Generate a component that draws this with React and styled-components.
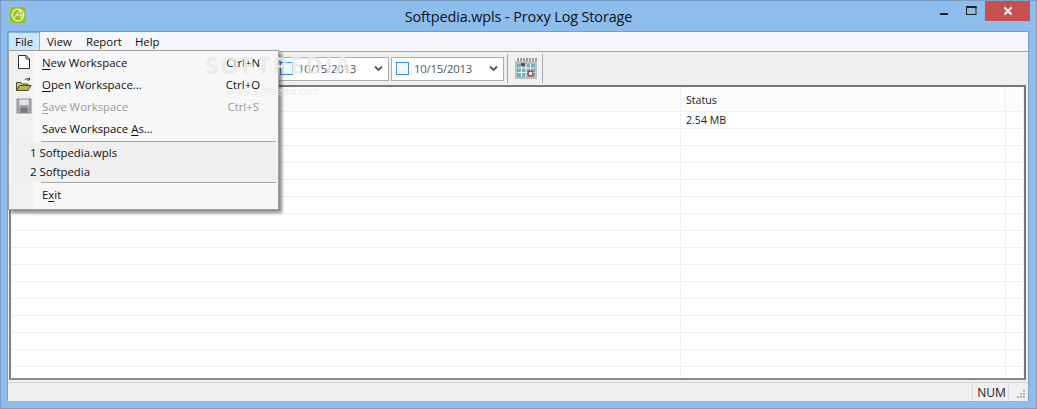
import React from "react";
import styled, { createGlobalStyle } from "styled-components";

const Global = createGlobalStyle`
  html, body { margin: 0; padding: 0; background: #8dbdec; }
  * { box-sizing: border-box; }
`;
const FONT = `"Open Sans", "Noto Sans", "Liberation Sans", sans-serif`;

const Win = styled.div`
  position: relative; width: 1037px; height: 409px; overflow: hidden;
  background: #8dbdec; border: 1px solid #7a9ec8;
  display: flex; flex-direction: column; font-family: ${FONT}; color: #111;
`;
const TitleBar = styled.div`
  height: 30px; flex: none; position: relative; display: flex; align-items: center; justify-content: center;
`;
const Title = styled.div`font-size: 14.4px; letter-spacing: -0.1px; color: #111; margin-top: 1px;`;
const AppIcon = styled.svg`position: absolute; left: 9px; top: 6px;`;
const Controls = styled.div`position: absolute; right: 6px; top: 0; display: flex; align-items: flex-start;`;
const CtrlBtn = styled.div`width: ${p => p.$w}px; height: 20px; display: flex; align-items: center; justify-content: center; background: ${p => p.$bg || "transparent"};`;
const Client = styled.div`
  flex: 1; min-height: 0; margin: 0 7px 7px 6px; display: flex; flex-direction: column;
  background: #f0f0f0; border-left: 1px solid #7a9ec8; border-right: 1px solid #7a9ec8; border-top: 1px solid #7a9ec8;
`;
const MenuBar = styled.div`height: 20px; flex: none; background: #f5f6f9; display: flex; align-items: center; font-size: 11.4px; border-bottom: 1px solid #a2a2a2;`;
const MenuItem = styled.div`
  height: 19px; padding: 0 ${p => p.$pad ?? 7}px; display: flex; align-items: center; margin-right: ${p => p.$mr ?? 0}px;
  ${p => p.$active && `background: #cfe5fa; border: 1px solid #7fb3e6;`}
`;
const Toolbar = styled.div`height: 33px; flex: none; background: #f0f0f0; display: flex; align-items: center; padding-left: 267px;`;
const DatePick = styled.div`
  width: ${p => p.$w}px; height: 24px; background: #fff; border: 1px solid #acacac; display: flex; align-items: center;
  padding-left: 4px; font-size: 11.4px; letter-spacing: -0.25px; color: #555; margin-right: 2px; justify-content: space-between; padding-right: 5px;
`;
const DateLeft = styled.div`display: flex; align-items: center; gap: 5px;`;
const CheckBox = styled.div`width: 13px; height: 13px; border: 1px solid #3c8ee6; background: #f2f8fe;`;
const Sep = styled.div`width: 1px; height: 29px; background: #a8a8a8; margin: ${p => p.$m};`;
const ListBox = styled.div`
  flex: 1; min-height: 0; margin: 0 2px 2px 1px; background: #fff; border: 2px solid #777; border-left-color: #7f7f7f;
  border-bottom-color: #8a8a8a; display: flex; flex-direction: column; overflow: hidden;
`;
const HeaderRow = styled.div`height: 25px; flex: none; background: #fcfcfc; display: grid; grid-template-columns: 670px 325px 1fr; border-bottom: 1px solid #eaf1fa; font-size: 10.6px;`;
const HeadCell = styled.div`border-right: 1px solid #e8f0fb; padding: 6px 0 0 5px; color: #222;`;
const Row = styled.div`height: 17px; flex: none; display: grid; grid-template-columns: 670px 325px 1fr; border-bottom: 1px solid #f0f0f0; font-size: 10.6px;`;
const Cell = styled.div`border-right: 1px solid #f0f0f0; padding: 0 0 0 5px; color: #222; line-height: 16px;`;
const StatusBar = styled.div`height: 19px; flex: none; border-top: 1px solid #d4d4d4; background: #efefef; display: flex; justify-content: flex-end; align-items: stretch; font-size: 12px; position: relative;`;
const NumPanel = styled.div`width: 37px; border-left: 1px solid #dcdcdc; border-right: 1px solid #dcdcdc; margin-right: 19px; padding-left: 2px; display: flex; align-items: center; justify-content: center; color: #222; font-size: 12px;`;
const Grip = styled.svg`position: absolute; right: 2px; bottom: 2px;`;
const Menu = styled.div`
  position: absolute; left: 7px; top: 49px; width: 271px; height: 160px; background: #f7f7f7;
  border: 1px solid #a0a0a0; box-shadow: 3px 3px 3px rgba(0,0,0,.45); font-size: 11.4px; z-index: 5;
  display: flex; flex-direction: column;
`;
const Gutter = styled.div`position: absolute; left: 0; top: 0; bottom: 0; width: 25px; background: #f1f1f1;`;
const Item = styled.div`
  height: 22px; display: flex; align-items: center; position: relative; padding: 0 18px 0 33px; justify-content: space-between;
  color: ${p => p.$off ? "#9a9a9a" : "#111"};
`;
const Shortcut = styled.span`text-align: right; margin-right: ${p => p.$mr ?? 0}px;`;
const IconSlot = styled.div`position: absolute; left: 7px; top: 3px; width: 16px; height: 16px;`;
const Divider = styled.div`height: 1px; background: #a8a8a8; margin: ${p => p.$m}; margin-left: 32px; margin-right: 2px; position: relative;`;
const Recent = styled.div`background: #efefef; position: relative; padding: 1px 0 1px 21px; height: 40px; display: flex; flex-direction: column;`;
const RecentItem = styled.div`height: 19px; display: flex; align-items: center;`;
const U = styled.span`text-decoration: underline; text-underline-offset: 2px;`;
const Mark = styled.div`
  position: absolute; left: ${p => p.$x}px; top: ${p => p.$y}px; font-size: ${p => p.$s}px; font-weight: ${p => p.$w}; color: rgba(232,232,232,.8);
  letter-spacing: ${p => p.$ls}px; z-index: 6; pointer-events: none; white-space: nowrap;
`;

const rows = Array.from({ length: 15 });

export default function App() {
  return (
    <>
      <Global />
      <Win>
        <TitleBar>
          <AppIcon width="16" height="16" viewBox="0 0 16 16">
            <rect x="0" y="0" width="16" height="16" rx="3" fill="#9cc11c" />
            <circle cx="8" cy="8" r="5.8" fill="none" stroke="#f1f7d8" strokeWidth="1.2" />
            <path d="M3.5 12 L10.5 2.5 L11.5 12 M6 8 H14" fill="none" stroke="#f1f7d8" strokeWidth="1" />
          </AppIcon>
          <Title>Softpedia.wpls - Proxy Log Storage</Title>
          <Controls>
            <CtrlBtn $w={29}>
              <svg width="10" height="10" viewBox="0 0 10 10"><rect x="1" y="7" width="8" height="2" fill="#222" /></svg>
            </CtrlBtn>
            <CtrlBtn $w={27}>
              <svg width="12" height="10" viewBox="0 0 12 10"><rect x=".5" y=".5" width="9.5" height="8" fill="none" stroke="#222" /><rect x="0" y="0" width="10.5" height="2" fill="#222" /></svg>
            </CtrlBtn>
            <CtrlBtn $w={45} $bg="#c75050">
              <svg width="10" height="10" viewBox="0 0 10 10"><path d="M1.5 1.5 L8.5 8.5 M8.5 1.5 L1.5 8.5" stroke="#fff" strokeWidth="2" /></svg>
            </CtrlBtn>
          </Controls>
        </TitleBar>
        <Client>
          <MenuBar>
            <MenuItem $active $pad={6} $mr={2}>File</MenuItem>
            <MenuItem $pad={5} $mr={4}>View</MenuItem>
            <MenuItem $pad={5} $mr={1}>Report</MenuItem>
            <MenuItem>Help</MenuItem>
          </MenuBar>
          <Toolbar>
            <DatePick $w={114}>
              <DateLeft><CheckBox />10/15/2013</DateLeft>
              <svg width="9" height="7" viewBox="0 0 9 7"><path d="M1 1.5 L4.5 5 L8 1.5" fill="none" stroke="#555" strokeWidth="1.8" /></svg>
            </DatePick>
            <DatePick $w={113}>
              <DateLeft><CheckBox />10/15/2013</DateLeft>
              <svg width="9" height="7" viewBox="0 0 9 7"><path d="M1 1.5 L4.5 5 L8 1.5" fill="none" stroke="#555" strokeWidth="1.8" /></svg>
            </DatePick>
            <Sep $m="0 6px 0 1px" />
            <svg width="24" height="22" viewBox="0 0 24 22">
              <path d="M4 0v4M7 0v4M10 0v4M13 0v4M16 0v4M19 0v4M22 0v4" stroke="#444" strokeWidth="1" />
              <rect x="1" y="3" width="22" height="18" fill="#bdbdbd" />
              <rect x="3" y="6" width="18" height="13" fill="#6fb0b8" />
              <path d="M3.5 10H21M3.5 14.5H21M7.5 6V19M12 6V19M16.5 6V19" stroke="#fff" strokeWidth="1" />
              <rect x="7" y="5" width="4" height="3" fill="#a5303a" />
              <circle cx="16.5" cy="15.5" r="2.5" fill="#eee" stroke="#b03a40" strokeWidth="1.3" />
            </svg>
            <Sep $m="0 0 0 4px" />
          </Toolbar>
          <ListBox>
            <HeaderRow>
              <HeadCell />
              <HeadCell>Status</HeadCell>
              <HeadCell />
            </HeaderRow>
            <Row><Cell /><Cell>2.54 MB</Cell><Cell /></Row>
            {rows.map((_, i) => <Row key={i}><Cell /><Cell /><Cell /></Row>)}
          </ListBox>
          <StatusBar>
            <NumPanel>NUM</NumPanel>
            <Grip width="10" height="10" viewBox="0 0 10 10">
              <path d="M7 1h2v2H7zM4 4h2v2H4zM7 4h2v2H7zM1 7h2v2H1zM4 7h2v2H4zM7 7h2v2H7z" fill="#b4b4b4" />
            </Grip>
          </StatusBar>
        </Client>
        <Menu>
          <Gutter />
          <Item>
            <IconSlot>
              <svg width="16" height="16" viewBox="0 0 16 16"><path d="M2.5 1.5H10L13.5 5V14.5H2.5Z" fill="#fff" stroke="#333" /><path d="M10 1.5V5H13.5" fill="none" stroke="#333" /></svg>
            </IconSlot>
            <span><U>N</U>ew Workspace</span><Shortcut>Ctrl+N</Shortcut>
          </Item>
          <Item>
            <IconSlot>
              <svg width="16" height="16" viewBox="0 0 16 16"><path d="M0.5 14.5V6.5H5L6 8H12V14.5Z" fill="#c9c477" stroke="#55522a" /><path d="M.8 14.5L3.5 9.5H15L12 14.5Z" fill="#b9b35a" stroke="#55522a" /><path d="M9 4 C10 2 12 2 13 3.5 M13.5 1.5V4H11" fill="none" stroke="#444" /></svg>
            </IconSlot>
            <span><U>O</U>pen Workspace...</span><Shortcut>Ctrl+O</Shortcut>
          </Item>
          <Item $off>
            <IconSlot>
              <svg width="16" height="16" viewBox="0 0 16 16"><rect x="1" y="1" width="14" height="14" fill="#a8a8a8" stroke="#8d8d8d" /><rect x="3.5" y="1.5" width="9" height="5.5" fill="#e6e6e6" /><rect x="4.5" y="9.5" width="7" height="5" fill="#777" /></svg>
            </IconSlot>
            <span><U>S</U>ave Workspace</span><Shortcut $mr={1}>Ctrl+S</Shortcut>
          </Item>
          <Item><span>Save Workspace <U>A</U>s...</span></Item>
          <Divider $m="2px 0 0" />
          <Recent>
            <RecentItem>1 Softpedia.wpls</RecentItem>
            <RecentItem>2 Softpedia</RecentItem>
          </Recent>
          <Divider $m="0" />
          <Item><span>E<U>x</U>it</span></Item>
        </Menu>
        <Mark $x={204} $y={47} $s={24} $w={700} $ls={2}>SOFTPEDIA</Mark>
        <Mark $x={226} $y={83} $s={10} $w={400} $ls={0}>www.softpedia.com</Mark>
      </Win>
    </>
  );
}
